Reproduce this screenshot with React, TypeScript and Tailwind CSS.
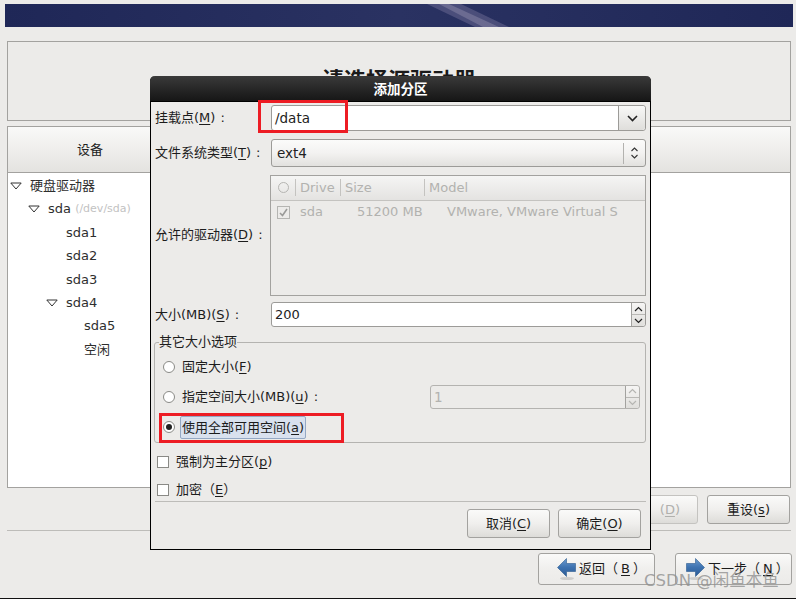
const F = '[font-family:"DejaVu_Sans","Noto_Sans_CJK_SC",sans-serif]';

function U({ c }: { c: string }) {
  return <span className="underline underline-offset-2">{c}</span>;
}

function Colon() {
  return <span className="ml-[5px]">:</span>;
}

function Tri({ className }: { className?: string }) {
  return (
    <svg width="12" height="8" viewBox="0 0 12 8" className={className}>
      <path d="M0.8 1H11.2L6 7Z" fill="#fff" stroke="#333" strokeWidth="1" />
    </svg>
  );
}

function Radio({ on }: { on?: boolean }) {
  return (
    <span className="w-[12px] h-[12px] rounded-full border border-[#8a8a86] bg-white flex items-center justify-center shrink-0">
      {on && <span className="w-[6px] h-[6px] rounded-full bg-[#222]" />}
    </span>
  );
}

function Check() {
  return <span className="w-[12px] h-[12px] border border-[#8a8a86] bg-white shrink-0" />;
}

function Btn({ className, children }: { className?: string; children: React.ReactNode }) {
  return (
    <div className={`flex items-center justify-center rounded-[3px] border border-[#a3a29f] bg-gradient-to-b from-[#fafaf9] via-[#f0efed] to-[#dddcd9] text-[13px] text-[#1c1c1c] ${className ?? ""}`}>
      {children}
    </div>
  );
}

function Arrow({ right }: { right?: boolean }) {
  const id = right ? "arrowR" : "arrowL";
  return (
    <svg width="19" height="23" viewBox="0 0 19 23" className="shrink-0">
      <defs>
        <linearGradient id={id} x1="0" y1="0" x2="0" y2="1">
          <stop offset="0" stopColor="#6b9bd0" />
          <stop offset="0.5" stopColor="#3d72b0" />
          <stop offset="1" stopColor="#2c5a94" />
        </linearGradient>
      </defs>
      <ellipse cx="10" cy="20.5" rx="7" ry="1.6" fill="#000" opacity="0.13" />
      <path
        d={right ? "M0.5 5.5H9.5V0.5L18.5 9.5L9.5 18.5V13.5H0.5Z" : "M18.5 5.5H9.5V0.5L0.5 9.5L9.5 18.5V13.5H18.5Z"}
        fill={`url(#${id})`}
        stroke="#2c5a8f"
        strokeWidth="0.6"
      />
    </svg>
  );
}

function Spin({ disabled }: { disabled?: boolean }) {
  const s = disabled ? "#b5b5b2" : "#222";
  return (
    <div className="w-[14px] h-full border-l border-[#a3a29f] flex flex-col bg-gradient-to-b from-[#f6f5f4] to-[#e0dfdc] rounded-r-[3px]">
      <div className="flex-1 flex items-center justify-center border-b border-[#b9b8b5]">
        <svg width="9" height="6" viewBox="0 0 9 6"><path d="M1 5L4.5 1.5L8 5" fill="none" stroke={s} strokeWidth="1.2" /></svg>
      </div>
      <div className="flex-1 flex items-center justify-center">
        <svg width="9" height="6" viewBox="0 0 9 6"><path d="M1 1L4.5 4.5L8 1" fill="none" stroke={s} strokeWidth="1.2" /></svg>
      </div>
    </div>
  );
}

function TreeRow({ indent, tri, children }: { indent: number; tri?: boolean; children: React.ReactNode }) {
  return (
    <div className="h-[23.4px] flex items-center text-[13px] text-[#2e2e2e]" style={{ paddingLeft: indent }}>
      {tri && <Tri className="mr-[8px] -ml-[20px]" />}
      {children}
    </div>
  );
}

export default function App() {
  return (
    <div className={`relative w-[796px] h-[599px] overflow-hidden bg-[#ecebe9] ${F} flex flex-col`}>
      {/* banner */}
      <div className="mt-[4px] ml-[5px] mr-[3px] h-[23px] shrink-0 overflow-hidden bg-gradient-to-r from-[#1f2757] via-[#2a3262] to-[#1f2757]">
        <svg width="788" height="23" viewBox="0 0 788 23" className="block">
          <path d="M422 0H456L504 23H470Z" fill="#8d88ab" opacity="0.35" />
          <path d="M434 0H444L494 23H478Z" fill="#b5b1c8" opacity="0.3" />
        </svg>
      </div>

      {/* title panel */}
      <div className="mt-[14px] ml-[7px] mr-[5px] h-[80px] shrink-0 border border-[#a3a29f] flex items-center justify-center">
        <span className="text-[22px] font-bold text-[#1a1a1a] leading-none">请选择源驱动器</span>
      </div>

      {/* device panel */}
      <div className="mt-[5px] ml-[7px] mr-[5px] h-[362px] shrink-0 border border-[#a3a29f] bg-white flex flex-col">
        <div className="h-[46px] shrink-0 border-b border-[#a3a29f] bg-gradient-to-b from-[#f9f9f8] via-[#efeeec] to-[#e4e3e0] flex items-center text-[13px] text-[#222]">
          <span className="ml-[69px]">设备</span>
        </div>
        <div className="pt-[1px]">
          <TreeRow indent={22} tri>硬盘驱动器</TreeRow>
          <TreeRow indent={40} tri>
            sda&nbsp;<span className="text-[11px] text-[#c2c2c2]">(/dev/sda)</span>
          </TreeRow>
          <TreeRow indent={58}>sda1</TreeRow>
          <TreeRow indent={58}>sda2</TreeRow>
          <TreeRow indent={58}>sda3</TreeRow>
          <TreeRow indent={58} tri>sda4</TreeRow>
          <TreeRow indent={76}>sda5</TreeRow>
          <TreeRow indent={76}>空闲</TreeRow>
        </div>
      </div>

      {/* device action buttons */}
      <div className="mt-[7px] mr-[6px] flex justify-end gap-[9px] h-[29px] shrink-0">
        <Btn className="w-[80px] text-[#b0b0ad] border-[#c4c3c0] justify-end pr-[17px]">
          (<U c="D" />)
        </Btn>
        <Btn className="w-[83px]">
          重设(<U c="s" />)
        </Btn>
      </div>

      <div className="mt-[6px] ml-[7px] mr-[5px] h-px shrink-0 bg-[#bdbcb9]" />

      {/* wizard buttons */}
      <div className="mt-[22px] mr-[4px] flex justify-end gap-[20px] h-[32px] shrink-0">
        <Btn className="w-[117px] justify-start pl-[18px] gap-[3px] bg-gradient-to-b from-[#f6f5f4] to-[#ecebe9]">
          <Arrow />
          返回（<U c="B" />）
        </Btn>
        <Btn className="w-[117px] justify-start pl-[10px] gap-[3px] border-[#6f9fd0] bg-gradient-to-b from-[#f6f5f4] to-[#ecebe9]">
          <Arrow right />
          下一步（<U c="N" />）
        </Btn>
      </div>

      <div className="absolute left-0 right-0 bottom-0 h-[1px] bg-[#111]" />

      {/* watermark */}
      <div className="absolute left-[644px] top-[572px] text-[16.5px] leading-[18px] text-[#8f8f8f]/80 whitespace-nowrap">CSDN @闲鱼本鱼</div>

      {/* dialog */}
      <div className="absolute left-[150px] top-[76px] w-[501px] h-[474px] bg-[#ecebe9] border border-black border-t-0 rounded-t-[5px] flex flex-col text-[13px] text-[#1c1c1c]">
        <div className="h-[26px] shrink-0 -mx-px pt-[1px] rounded-t-[5px] bg-gradient-to-b from-[#3a3a3a] to-[#161616] border-b border-black text-white font-semibold text-[13.5px] flex items-center justify-center">
          添加分区
        </div>

        <div className="flex-1 flex flex-col pl-[4px] pr-[4px]">
          {/* mount point */}
          <div className="mt-[3px] flex items-center h-[26px]">
            <span className="w-[116px]">挂载点(<U c="M" />)<Colon /></span>
            <div className="flex-1 h-full border border-[#9c9b98] rounded-[3px] bg-white flex">
              <span className="flex-1 pl-[3px] leading-[25px] text-[13.5px] text-[#222]">/data</span>
              <div className="w-[27px] border-l border-[#9c9b98] rounded-r-[3px] bg-gradient-to-b from-[#f8f8f7] to-[#dfdedb] flex items-center justify-center">
                <svg width="11" height="7" viewBox="0 0 11 7"><path d="M1 1L5.5 5.5L10 1" fill="none" stroke="#222" strokeWidth="1.6" /></svg>
              </div>
            </div>
          </div>

          {/* fs type */}
          <div className="mt-[8px] flex items-center h-[28px]">
            <span className="w-[116px]">文件系统类型(<U c="T" />)<Colon /></span>
            <div className="flex-1 h-full border border-[#9c9b98] rounded-[3px] bg-gradient-to-b from-[#fbfbfa] via-[#f3f2f1] to-[#e2e1de] flex items-center pl-[5px] text-[13.5px] text-[#222]">
              <span className="flex-1">ext4</span>
              <div className="w-[22px] h-[21px] border-l border-[#b3b2af] flex items-center justify-center">
                <svg width="9" height="14" viewBox="0 0 9 14"><path d="M1.5 5L4.5 2L7.5 5M1.5 9L4.5 12L7.5 9" fill="none" stroke="#333" strokeWidth="1.1" /></svg>
              </div>
            </div>
          </div>

          {/* drives */}
          <div className="mt-[8px] flex items-center h-[121px]">
            <span className="w-[115px] pb-[2px]">允许的驱动器(<U c="D" />)<Colon /></span>
            <div className="flex-1 h-full border border-[#a3a29f] flex flex-col text-[#b2b2af] text-[13px]">
              <div className="h-[25px] shrink-0 border-b border-[#c4c3c0] bg-gradient-to-b from-[#f5f5f4] to-[#e4e3e1] flex items-center pb-[1px]">
                <span className="w-[24px] flex justify-center"><span className="w-[11px] h-[11px] rounded-full border border-[#b5b5b2]" /></span>
                <span className="w-[45px] h-[17px] border-l border-[#c4c3c0] pl-[4px] leading-[17px]">Drive</span>
                <span className="w-[84px] h-[17px] border-l border-[#c4c3c0] pl-[4px] leading-[17px]">Size</span>
                <span className="h-[17px] border-l border-[#c4c3c0] pl-[4px] leading-[17px]">Model</span>
              </div>
              <div className="h-[22px] flex items-center whitespace-nowrap">
                <span className="w-[24px] flex justify-center">
                  <span className="w-[13px] h-[13px] border border-[#b5b5b2] flex items-center justify-center">
                    <svg width="9" height="9" viewBox="0 0 9 9"><path d="M1 5L3.5 7.5L8 1" fill="none" stroke="#9a9a98" strokeWidth="1.6" /></svg>
                  </span>
                </span>
                <span className="ml-[5px] w-[57px]">sda</span>
                <span className="w-[90px]">51200 MB</span>
                <span>VMware, VMware Virtual S</span>
              </div>
            </div>
          </div>

          {/* size */}
          <div className="mt-[6px] flex items-center h-[25px]">
            <span className="w-[116px]">大小(MB)(<U c="S" />)<Colon /></span>
            <div className="flex-1 h-full border border-[#9c9b98] rounded-[3px] bg-white flex">
              <span className="flex-1 pl-[3px] leading-[23px] text-[13px] text-[#222]">200</span>
              <Spin />
            </div>
          </div>

          {/* options fieldset */}
          <div className="relative mt-[15px] -ml-px h-[101px] border border-[#b4b3b0] rounded-[3px] flex flex-col pl-[8px] pr-[5px]">
            <span className="absolute left-[4px] -top-[9px] bg-[#ecebe9] leading-[16px]">其它大小选项</span>
            <div className="mt-[16px] h-[16px] flex items-center gap-[7px]">
              <Radio />
              <span>固定大小(<U c="F" />)</span>
            </div>
            <div className="mt-[10px] h-[24px] flex items-center gap-[7px]">
              <Radio />
              <span className="flex-1">指定空间大小(MB)(<U c="u" />)<Colon /></span>
              <div className="w-[210px] h-full border border-[#b4b3b0] rounded-[3px] flex text-[#b2b2af]">
                <span className="flex-1 pl-[3px] leading-[22px] text-[13.5px]">1</span>
                <Spin disabled />
              </div>
            </div>
            <div className="mt-[6px] h-[24px] flex items-center gap-[5px]">
              <Radio on />
              <span className="h-[23px] px-[1px] leading-[21px] border border-[#94a8c4] rounded-[2px] bg-[#d9e1ee]">使用全部可用空间(<U c="a" />)</span>
            </div>
          </div>

          {/* checks */}
          <div className="mt-[11px] h-[16px] flex items-center gap-[7px] pl-[2px]">
            <Check />
            <span>强制为主分区(<U c="p" />)</span>
          </div>
          <div className="mt-[12px] h-[16px] flex items-center gap-[7px] pl-[2px]">
            <Check />
            <span>加密（<U c="E" />）</span>
          </div>

          <div className="mt-[3px] h-px shrink-0 bg-[#bdbcb9]" />

          <div className="mt-[7px] flex justify-end gap-[8px] pr-[5px] h-[29px]">
            <Btn className="w-[83px]">取消(<U c="C" />)</Btn>
            <Btn className="w-[83px]">确定(<U c="O" />)</Btn>
          </div>
        </div>
      </div>

      {/* red annotation boxes */}
      <div className="absolute left-[258px] top-[100px] w-[90px] h-[33px] border-[3px] border-[#ed1c24]" />
      <div className="absolute left-[159px] top-[413px] w-[185px] h-[30px] border-[3px] border-[#ed1c24]" />
    </div>
  );
}
